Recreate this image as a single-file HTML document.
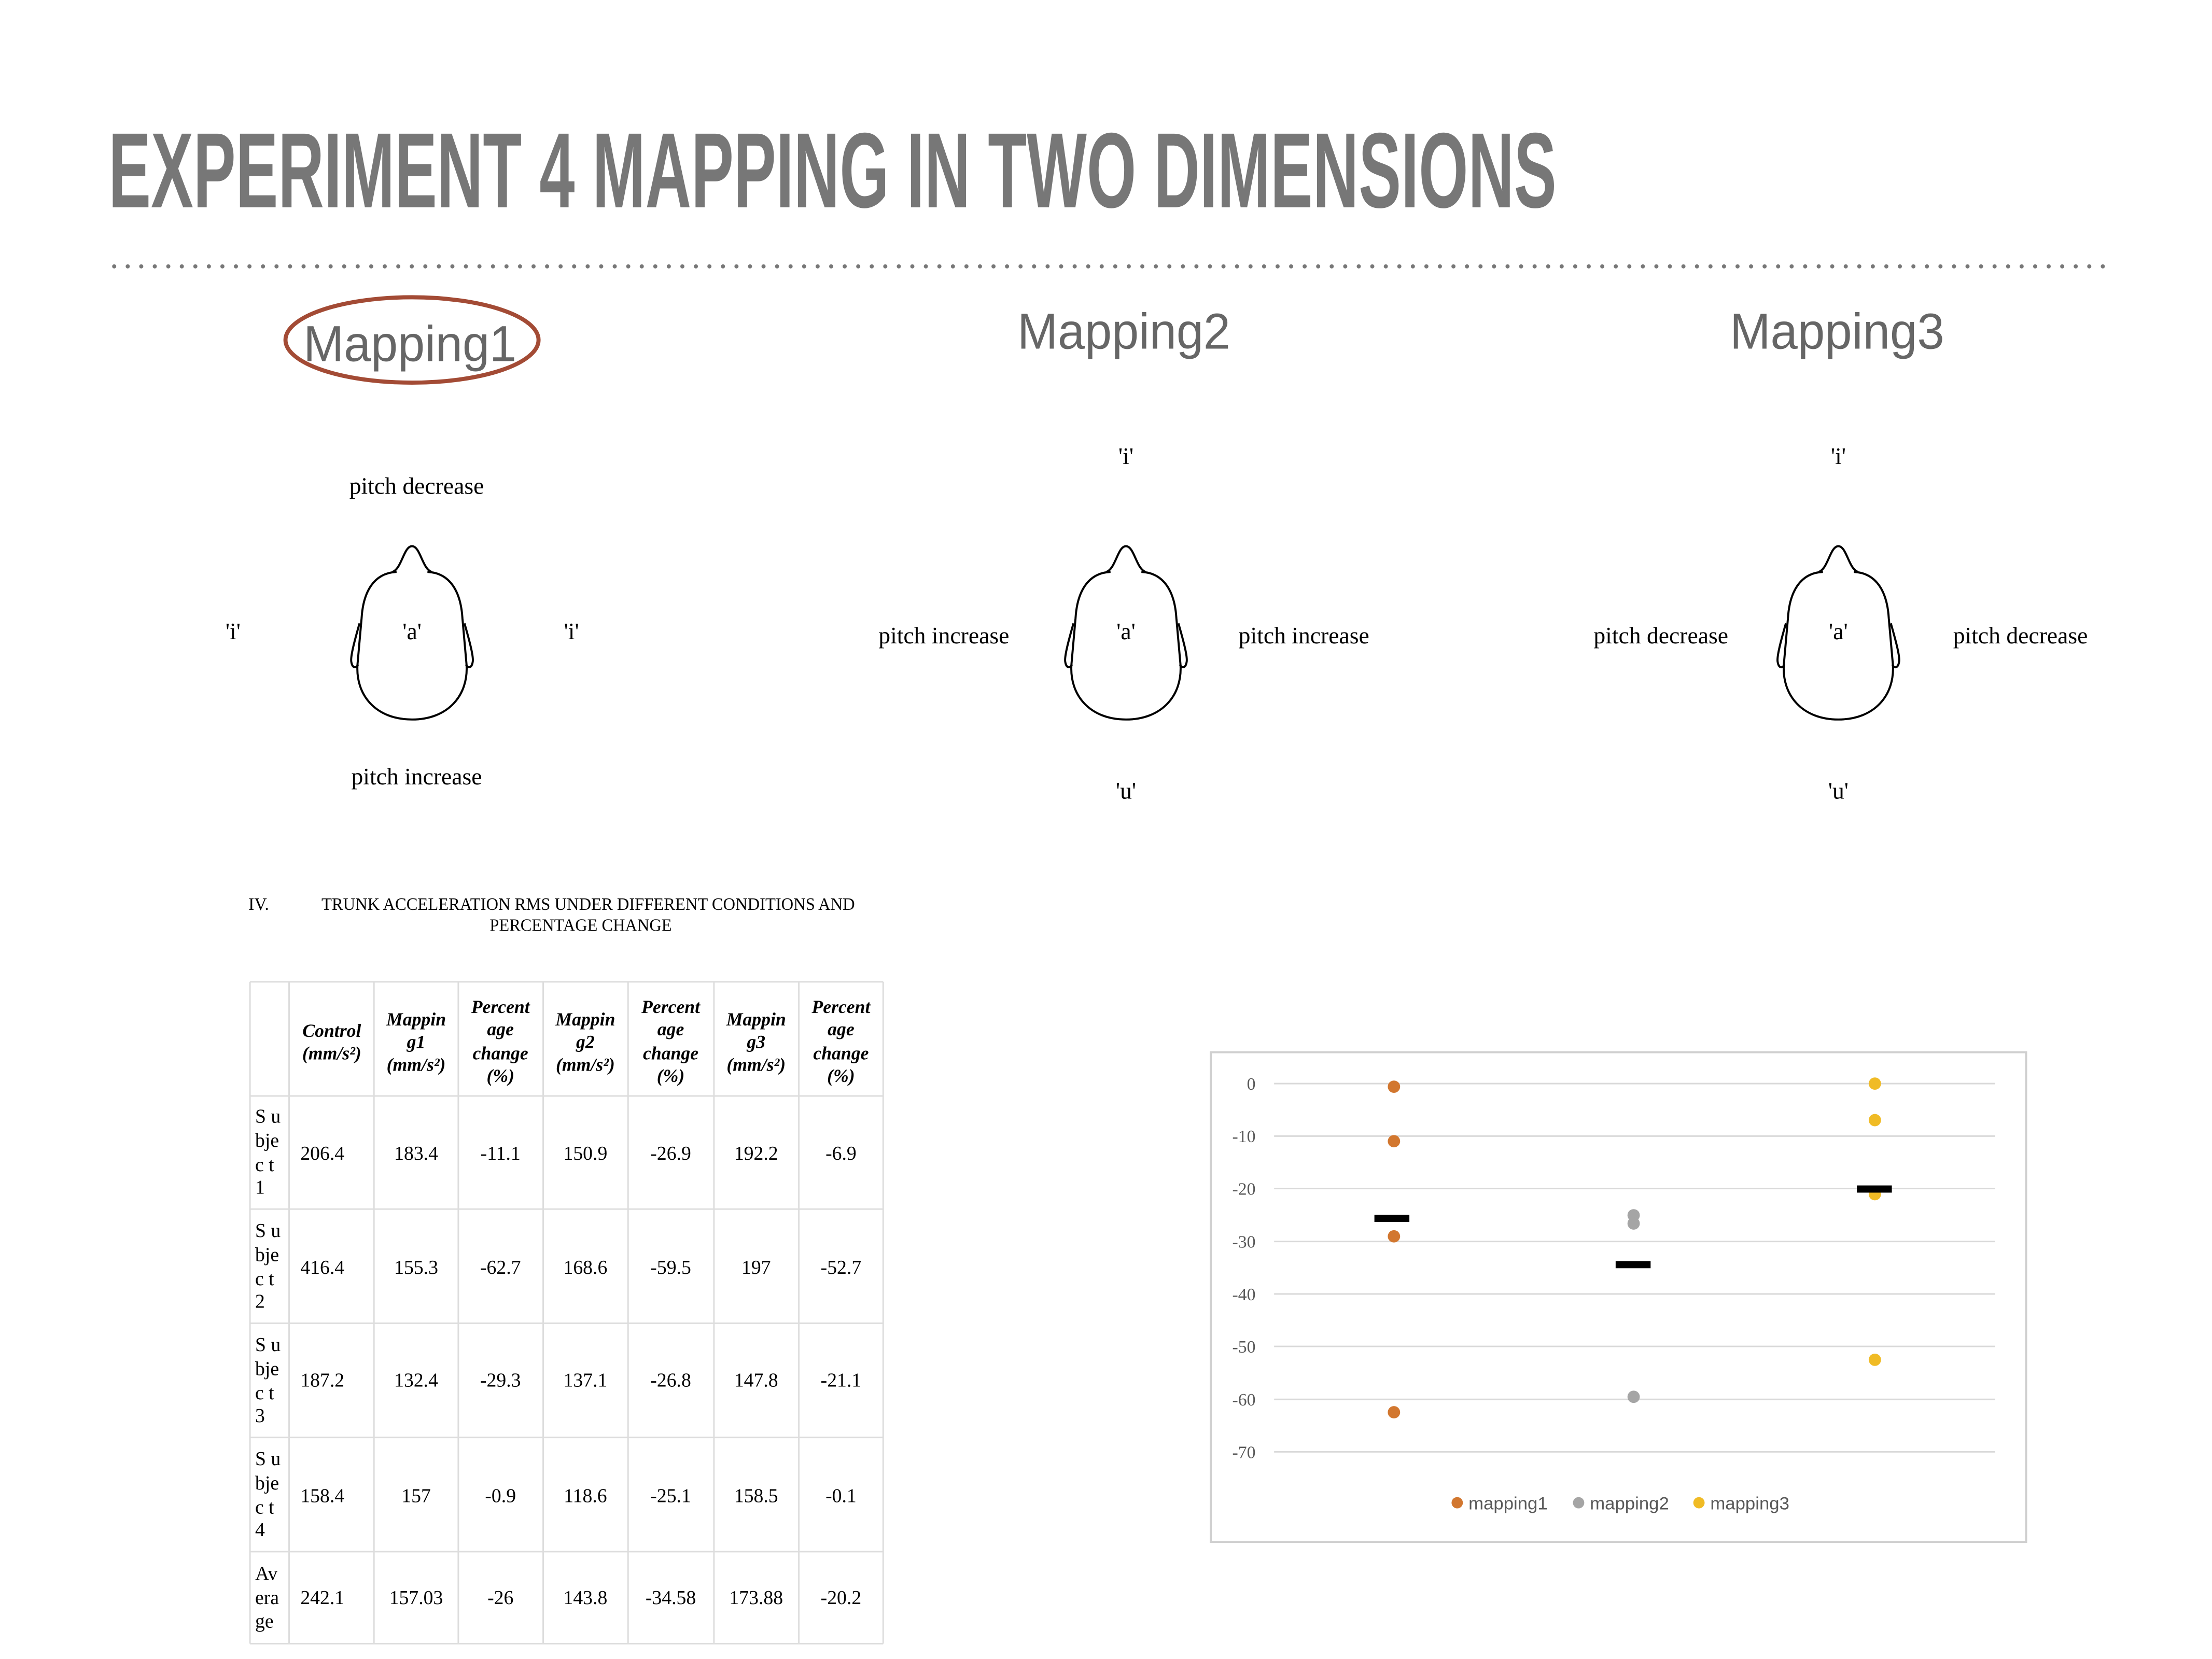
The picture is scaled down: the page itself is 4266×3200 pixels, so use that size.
<!DOCTYPE html>
<html><head><meta charset="utf-8"><style>html,body{margin:0;padding:0;background:#fff}svg{display:block}</style></head>
<body>
<svg width="4266" height="3200" viewBox="0 0 4266 3200" xmlns="http://www.w3.org/2000/svg">
<defs>
<g id="head" fill="none" stroke="#000" stroke-width="4" stroke-linejoin="round">
<path d="M -38 50 C -20 44 -16 0 0 0 C 16 0 20 44 38 50"/>
<path d="M -30 50 C -75 52 -95 90 -98 140 L -106 230 C -110 290 -70 337 0 337 C 70 337 110 290 106 230 L 98 140 C 95 90 75 52 30 50"/>
<path d="M -102 150 C -112 185 -120 215 -118 225 C -116 238 -108 238 -105 230"/>
<path d="M 102 150 C 112 185 120 215 118 225 C 116 238 108 238 105 230"/>
</g>
</defs>
<rect width="4266" height="3200" fill="#fff"/>
<g transform="scale(0.992)">
<text x="211" y="403" font-family="Liberation Sans, sans-serif" font-weight="bold" font-size="208" fill="#777" textLength="2815" lengthAdjust="spacingAndGlyphs">EXPERIMENT 4 MAPPING IN TWO DIMENSIONS</text>
<line x1="222" y1="518" x2="4090" y2="518" stroke="#777" stroke-width="8" stroke-linecap="round" stroke-dasharray="0 26.3"/>
<g font-family="Liberation Sans, sans-serif" font-size="98" fill="#666">
<text x="590" y="702" textLength="414" lengthAdjust="spacingAndGlyphs">Mapping1</text>
<text x="1978" y="678" textLength="414" lengthAdjust="spacingAndGlyphs">Mapping2</text>
<text x="3363" y="678" textLength="417" lengthAdjust="spacingAndGlyphs">Mapping3</text>
</g>
<ellipse cx="801" cy="661" rx="246" ry="83" fill="none" stroke="#a34b35" stroke-width="8"/>
<use href="#head" x="801" y="1062"/>
<use href="#head" x="2189" y="1062"/>
<use href="#head" x="3574" y="1062"/>
<g font-family="Liberation Serif, serif" font-size="46" fill="#000" text-anchor="middle">
<text x="810" y="960">pitch decrease</text>
<text x="810" y="1525">pitch increase</text>
<text x="453" y="1243">'i'</text>
<text x="1111" y="1243">'i'</text>
<text x="801" y="1243">'a'</text>
<text x="2189" y="902">'i'</text>
<text x="2189" y="1243">'a'</text>
<text x="2189" y="1553">'u'</text>
<text x="1835" y="1251">pitch increase</text>
<text x="2535" y="1251">pitch increase</text>
<text x="3574" y="902">'i'</text>
<text x="3574" y="1243">'a'</text>
<text x="3574" y="1553">'u'</text>
<text x="3229" y="1251">pitch decrease</text>
<text x="3928" y="1251">pitch decrease</text>
</g>
<g font-family="Liberation Serif, serif" font-size="34" fill="#000">
<text x="483" y="1769">IV.</text>
<text x="625" y="1769" textLength="1037" lengthAdjust="spacingAndGlyphs">TRUNK ACCELERATION RMS UNDER DIFFERENT CONDITIONS AND</text>
<text x="952" y="1810" textLength="354" lengthAdjust="spacingAndGlyphs">PERCENTAGE CHANGE</text>
</g>
<g stroke="#ddd" stroke-width="3">
<line x1="486" y1="1909" x2="1717" y2="1909"/>
<line x1="486" y1="2131" x2="1717" y2="2131"/>
<line x1="486" y1="2351" x2="1717" y2="2351"/>
<line x1="486" y1="2573" x2="1717" y2="2573"/>
<line x1="486" y1="2795" x2="1717" y2="2795"/>
<line x1="486" y1="3017" x2="1717" y2="3017"/>
<line x1="486" y1="3196" x2="1717" y2="3196"/>
<line x1="486" y1="1909" x2="486" y2="3196"/>
<line x1="562" y1="1909" x2="562" y2="3196"/>
<line x1="727" y1="1909" x2="727" y2="3196"/>
<line x1="891" y1="1909" x2="891" y2="3196"/>
<line x1="1056" y1="1909" x2="1056" y2="3196"/>
<line x1="1221" y1="1909" x2="1221" y2="3196"/>
<line x1="1388" y1="1909" x2="1388" y2="3196"/>
<line x1="1553" y1="1909" x2="1553" y2="3196"/>
<line x1="1717" y1="1909" x2="1717" y2="3196"/>
</g>
<g font-family="Liberation Serif, serif" font-size="36" font-style="italic" font-weight="bold" fill="#000" text-anchor="middle">
<text x="645" y="2016">Control</text><text x="645" y="2060">(mm/s²)</text>
<text x="809" y="1994">Mappin</text><text x="809" y="2038">g1</text><text x="809" y="2082">(mm/s²)</text>
<text x="973" y="1970">Percent</text><text x="973" y="2013">age</text><text x="973" y="2060">change</text><text x="973" y="2104">(%)</text>
<text x="1138" y="1994">Mappin</text><text x="1138" y="2038">g2</text><text x="1138" y="2082">(mm/s²)</text>
<text x="1304" y="1970">Percent</text><text x="1304" y="2013">age</text><text x="1304" y="2060">change</text><text x="1304" y="2104">(%)</text>
<text x="1470" y="1994">Mappin</text><text x="1470" y="2038">g3</text><text x="1470" y="2082">(mm/s²)</text>
<text x="1635" y="1970">Percent</text><text x="1635" y="2013">age</text><text x="1635" y="2060">change</text><text x="1635" y="2104">(%)</text>
</g>
<g font-family="Liberation Serif, serif" font-size="38" fill="#000">
<g>
<text x="496" y="2183">S u</text><text x="496" y="2230">bje</text><text x="496" y="2277">c  t</text><text x="496" y="2321">1</text>
<text x="496" y="2405">S u</text><text x="496" y="2452">bje</text><text x="496" y="2499">c  t</text><text x="496" y="2543">2</text>
<text x="496" y="2627">S u</text><text x="496" y="2674">bje</text><text x="496" y="2721">c  t</text><text x="496" y="2765">3</text>
<text x="496" y="2849">S u</text><text x="496" y="2896">bje</text><text x="496" y="2943">c  t</text><text x="496" y="2987">4</text>
<text x="496" y="3072">Av</text><text x="496" y="3119">era</text><text x="496" y="3165">ge</text>
</g>
<g>
<text x="584" y="2255">206.4</text><text x="584" y="2477">416.4</text><text x="584" y="2696">187.2</text><text x="584" y="2921">158.4</text><text x="584" y="3119">242.1</text>
</g>
<g text-anchor="middle">
<text x="809" y="2255">183.4</text><text x="973" y="2255">-11.1</text><text x="1138" y="2255">150.9</text><text x="1304" y="2255">-26.9</text><text x="1470" y="2255">192.2</text><text x="1635" y="2255">-6.9</text>
<text x="809" y="2477">155.3</text><text x="973" y="2477">-62.7</text><text x="1138" y="2477">168.6</text><text x="1304" y="2477">-59.5</text><text x="1470" y="2477">197</text><text x="1635" y="2477">-52.7</text>
<text x="809" y="2696">132.4</text><text x="973" y="2696">-29.3</text><text x="1138" y="2696">137.1</text><text x="1304" y="2696">-26.8</text><text x="1470" y="2696">147.8</text><text x="1635" y="2696">-21.1</text>
<text x="809" y="2921">157</text><text x="973" y="2921">-0.9</text><text x="1138" y="2921">118.6</text><text x="1304" y="2921">-25.1</text><text x="1470" y="2921">158.5</text><text x="1635" y="2921">-0.1</text>
<text x="809" y="3119">157.03</text><text x="973" y="3119">-26</text><text x="1138" y="3119">143.8</text><text x="1304" y="3119">-34.58</text><text x="1470" y="3119">173.88</text><text x="1635" y="3119">-20.2</text>
</g>
</g>
<rect x="2354" y="2046" width="1585" height="952" fill="#fff" stroke="#d0d0d0" stroke-width="4"/>
<g stroke="#d9d9d9" stroke-width="3">
<line x1="2477" y1="2107" x2="3879" y2="2107"/>
<line x1="2477" y1="2209" x2="3879" y2="2209"/>
<line x1="2477" y1="2311" x2="3879" y2="2311"/>
<line x1="2477" y1="2414" x2="3879" y2="2414"/>
<line x1="2477" y1="2516" x2="3879" y2="2516"/>
<line x1="2477" y1="2618" x2="3879" y2="2618"/>
<line x1="2477" y1="2721" x2="3879" y2="2721"/>
<line x1="2477" y1="2823" x2="3879" y2="2823"/>
</g>
<g font-family="Liberation Serif, serif" font-size="34" fill="#595959" text-anchor="end">
<text x="2441" y="2119">0</text>
<text x="2441" y="2221">-10</text>
<text x="2441" y="2323">-20</text>
<text x="2441" y="2426">-30</text>
<text x="2441" y="2528">-40</text>
<text x="2441" y="2630">-50</text>
<text x="2441" y="2733">-60</text>
<text x="2441" y="2835">-70</text>
</g>
<g fill="#d2772f">
<circle cx="2710" cy="2113" r="12"/><circle cx="2710" cy="2219" r="12"/><circle cx="2710" cy="2404" r="12"/><circle cx="2710" cy="2746" r="12"/>
</g>
<g fill="#a5a5a5">
<circle cx="3176" cy="2363" r="12"/><circle cx="3176" cy="2379" r="12"/><circle cx="3176" cy="2716" r="12"/>
</g>
<g fill="#f0bb25">
<circle cx="3645" cy="2107" r="12"/><circle cx="3645" cy="2178" r="12"/><circle cx="3645" cy="2322" r="12"/><circle cx="3645" cy="2644" r="12"/>
</g>
<g fill="#000">
<rect x="2672" y="2362" width="68" height="14"/>
<rect x="3141" y="2452" width="68" height="14"/>
<rect x="3610" y="2305" width="68" height="14"/>
</g>
<circle cx="2833" cy="2922" r="11" fill="#d2772f"/>
<circle cx="3069" cy="2922" r="11" fill="#a5a5a5"/>
<circle cx="3303" cy="2922" r="11" fill="#f0bb25"/>
<g font-family="Liberation Sans, sans-serif" font-size="35" fill="#595959">
<text x="2855" y="2935">mapping1</text>
<text x="3091" y="2935">mapping2</text>
<text x="3325" y="2935">mapping3</text>
</g>
</g>
</svg>
</body></html>
